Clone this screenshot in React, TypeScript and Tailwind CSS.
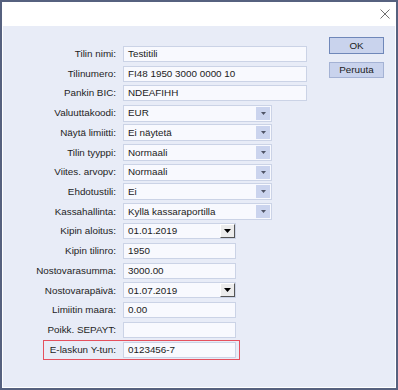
import React from "react";

type Kind = "text" | "select" | "date" | "short";

interface Field {
    label: string;
    value: string;
    kind: Kind;
}

const fields: Field[] = [
    { label: "Tilin nimi:", value: "Testitili", kind: "text" },
    { label: "Tilinumero:", value: "FI48 1950 3000 0000 10", kind: "text" },
    { label: "Pankin BIC:", value: "NDEAFIHH", kind: "text" },
    { label: "Valuuttakoodi:", value: "EUR", kind: "select" },
    { label: "Näytä limiitti:", value: "Ei näytetä", kind: "select" },
    { label: "Tilin tyyppi:", value: "Normaali", kind: "select" },
    { label: "Viites. arvopv:", value: "Normaali", kind: "select" },
    { label: "Ehdotustili:", value: "Ei", kind: "select" },
    { label: "Kassahallinta:", value: "Kyllä kassaraportilla", kind: "select" },
    { label: "Kipin aloitus:", value: "01.01.2019", kind: "date" },
    { label: "Kipin tilinro:", value: "1950", kind: "short" },
    { label: "Nostovarasumma:", value: "3000.00", kind: "short" },
    { label: "Nostovarapäivä:", value: "01.07.2019", kind: "date" },
    { label: "Limiitin maara:", value: "0.00", kind: "short" },
    { label: "Poikk. SEPAYT:", value: "", kind: "short" },
    { label: "E-laskun Y-tun:", value: "0123456-7", kind: "short" },
];

function FieldBox({ field }: { field: Field }) {
    const width =
        field.kind === "text" ? "w-[184px]" : field.kind === "select" ? "w-[149px]" : "w-[113px]";
    const height = field.kind === "select" ? "h-[17px]" : "h-[16px]";
    return (
        <div
            className={`${width} ${height} flex items-stretch border border-[#cbd3e6] bg-[#f8f9fe] p-px`}
        >
            <div className="flex-1 flex items-center pl-[3px] text-[9.85px] text-[#1b1b1b] leading-none whitespace-nowrap overflow-hidden">
                {field.value}
            </div>
            {field.kind === "select" && (
                <div className="w-[14px] bg-[#cbd4ee] flex items-center justify-center">
                    <svg width="5" height="3" viewBox="0 0 5 3">
                        <path d="M0 0 H5 L2.5 3 Z" fill="#4f5466" />
                    </svg>
                </div>
            )}
            {field.kind === "date" && (
                <div className="w-[15px] -my-px -mr-px bg-[#ececec] border-t border-l border-t-white border-l-white border-b border-r border-b-[#555] border-r-[#555] flex items-center justify-center">
                    <svg width="7" height="4" viewBox="0 0 7 4">
                        <path d="M0 0 H7 L3.5 4 Z" fill="#000" />
                    </svg>
                </div>
            )}
        </div>
    );
}

function Row({ field, highlight }: { field: Field; highlight?: boolean }) {
    return (
        <div className="relative grid grid-cols-[113px_1fr] gap-x-[7px] items-center h-[19.73px]">
            <div className="text-right text-[9.85px] text-[#1e1e1e] leading-none whitespace-nowrap">
                {field.label}
            </div>
            <FieldBox field={field} />
            {highlight && (
                <div className="absolute left-[40px] top-0 w-[197px] h-[20px] border border-[#e5505e]" />
            )}
        </div>
    );
}

export default function App() {
    return (
        <div
            className="w-[398px] h-[390px] border-2 border-[#56617f] bg-white flex flex-col"
            style={{ fontFamily: '"Liberation Sans", Arial, sans-serif' }}
        >
            <div className="h-[24px] flex items-center justify-end pr-[6px] shrink-0">
                <svg width="10" height="10" viewBox="0 0 10 10">
                    <path d="M0.5 0.5 L9.5 9.5 M9.5 0.5 L0.5 9.5" stroke="#707070" strokeWidth="1" />
                </svg>
            </div>
            <div className="flex-1 mx-px mb-px bg-[#e8ecf7] flex">
                <div className="flex-1 pt-[18px]">
                    {fields.map((f, i) => (
                        <Row key={f.label} field={f} highlight={i === fields.length - 1} />
                    ))}
                </div>
                <div className="w-[55px] mr-[11px] pt-[11px] flex flex-col gap-[8px]">
                    <button className="h-[17px] bg-[#c9d3ed] border border-[#6f87b9] text-[9.85px] text-[#1b1b1b] leading-none">
                        OK
                    </button>
                    <button className="h-[16px] bg-[#c9d3ed] border border-[#a4b2d4] text-[9.85px] text-[#1b1b1b] leading-none">
                        Peruuta
                    </button>
                </div>
            </div>
        </div>
    );
}
